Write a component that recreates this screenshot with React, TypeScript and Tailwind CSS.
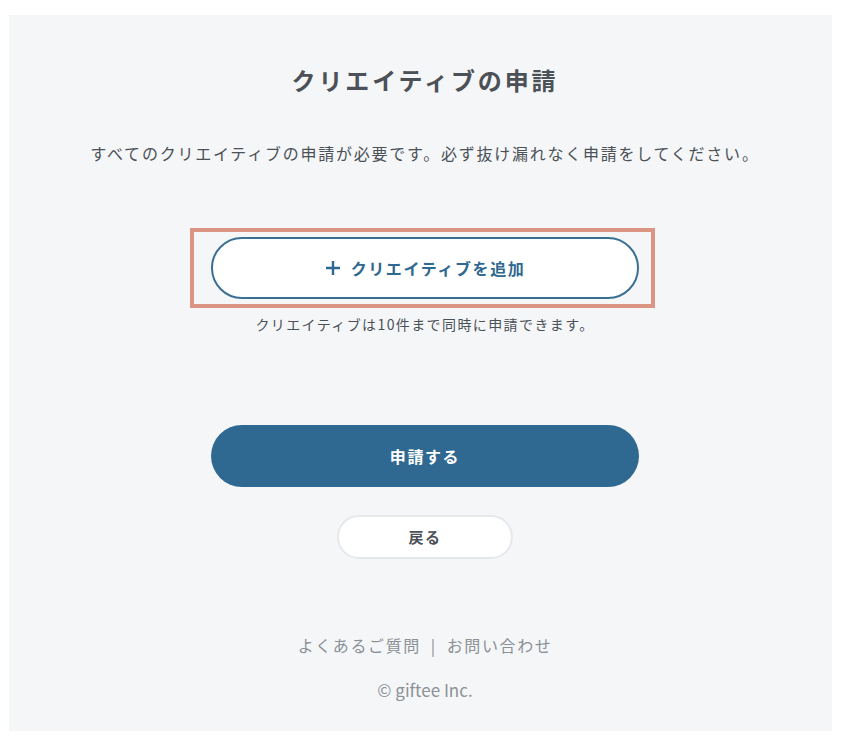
import { FC } from 'react';

const font = { fontFamily: '"Noto Sans CJK JP", "Noto Sans", sans-serif' };

const PlusIcon: FC = () => (
  <svg width="16" height="16" viewBox="0 0 16 16" fill="none">
    <path d="M8 1v14M1 8h14" stroke="currentColor" strokeWidth="2.4" />
  </svg>
);

export default function App() {
  return (
    <div className="min-h-[752px] bg-white pt-[15px] pl-[9px]" style={font}>
      <div className="flex h-[716px] w-[823px] flex-col items-center bg-[#f5f6f8] pl-[9px]">
        <h1 className="mt-[47px] text-[24px] font-bold leading-[36px] tracking-[0.12em] text-[#4b5157]">
          クリエイティブの申請
        </h1>
        <p className="mt-[43px] text-[16px] leading-[24px] tracking-[0.11em] text-[#4b5157]">
          すべてのクリエイティブの申請が必要です。必ず抜け漏れなく申請をしてください。
        </p>

        <div className="relative mt-[72px]">
          <button className="flex h-[62px] w-[428px] items-center justify-center gap-[10px] rounded-full border-2 border-[#3a6f94] bg-white text-[16px] font-bold tracking-[0.1em] text-[#2f6890]">
            <PlusIcon />
            <span>クリエイティブを追加</span>
          </button>
          <div className="pointer-events-none absolute -top-[9px] -bottom-[9px] -left-[21px] -right-[16px] border-4 border-[#dc9582]" />
        </div>
        <p className="mt-[15px] text-[14px] leading-[20px] tracking-[0.1em] text-[#4b5157]">
          クリエイティブは10件まで同時に申請できます。
        </p>

        <button className="mt-[91px] h-[62px] w-[428px] rounded-full bg-[#2f6890] text-[16px] font-bold tracking-[0.1em] text-white">
          申請する
        </button>
        <button className="mt-[28px] h-[44px] w-[176px] rounded-full border-2 border-[#e6e9ec] bg-white text-[15px] font-bold tracking-[0.1em] text-[#4b5157]">
          戻る
        </button>

        <div className="mt-[74px] flex items-center gap-[10px] text-[16px] leading-[24px] tracking-[0.1em] text-[#8b9196]">
          <span>よくあるご質問</span>
          <span>|</span>
          <span>お問い合わせ</span>
        </div>
        <p className="mt-[21px] text-[17px] leading-[24px] text-[#8b9196]">© giftee Inc.</p>
      </div>
    </div>
  );
}
